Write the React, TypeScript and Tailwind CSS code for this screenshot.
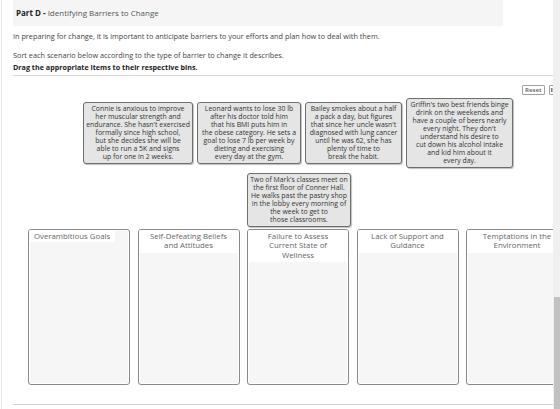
import React from "react";

const cards1: { w: string; lines: string[] }[] = [
  {
    w: "w-[110px]",
    lines: [
      "Connie is anxious to improve",
      "her muscular strength and",
      "endurance. She hasn't exercised",
      "formally since high school,",
      "but she decides she will be",
      "able to run a 5K and signs",
      "up for one in 2 weeks.",
    ],
  },
  {
    w: "w-[104px]",
    lines: [
      "Leonard wants to lose 30 lb",
      "after his doctor told him",
      "that his BMI puts him in",
      "the obese category. He sets a",
      "goal to lose 7 lb per week by",
      "dieting and exercising",
      "every day at the gym.",
    ],
  },
  {
    w: "w-[97px]",
    lines: [
      "Bailey smokes about a half",
      "a pack a day, but figures",
      "that since her uncle wasn't",
      "diagnosed with lung cancer",
      "until he was 62, she has",
      "plenty of time to",
      "break the habit.",
    ],
  },
  {
    w: "w-[107px]",
    lines: [
      "Griffin's two best friends binge",
      "drink on the weekends and",
      "have a couple of beers nearly",
      "every night. They don't",
      "understand his desire to",
      "cut down his alcohol intake",
      "and kid him about it",
      "every day.",
    ],
  },
];

const markLines = [
  "Two of Mark's classes meet on",
  "the first floor of Conner Hall.",
  "He walks past the pastry shop",
  "in the lobby every morning of",
  "the week to get to",
  "those classrooms.",
];

function Card({ w, lines }: { w: string; lines: string[] }) {
  return (
    <div
      className={`${w} shrink-0 bg-[#e5e5e5] border border-[#6e6e6e] rounded-[3px] shadow-[1px_1px_1px_rgba(0,0,0,0.25)] py-[2px] text-center text-[6.9px] leading-[8px] text-[#333]`}
    >
      {lines.map((l, i) => (
        <div key={i} className="whitespace-nowrap">
          {l}
        </div>
      ))}
    </div>
  );
}

const bins: string[][] = [
  ["Self-Defeating Beliefs", "and Attitudes"],
  ["Failure to Assess", "Current State of", "Wellness"],
  ["Lack of Support and", "Guidance"],
  ["Temptations in the", "Environment"],
];

function Bin({ children }: { children: React.ReactNode }) {
  return (
    <div className="w-[102px] h-[156px] shrink-0 border border-[#8a8a8e] rounded-[3px] bg-[#f6f6f7] shadow-[inset_0_0_0_1px_#ffffff] overflow-hidden">
      {children}
    </div>
  );
}

export default function App() {
  return (
    <div className="w-[560px] h-[409px] flex bg-white overflow-hidden font-['Open_Sans',sans-serif]">
      <div className="w-[553px] h-full overflow-hidden pl-[1px]">
        <div className="h-full border-l border-[#e4e4e4] pl-[11px]">
          <div className="h-[26px] w-[490px] bg-[#f5f5f5] flex items-center px-[3px] text-[8px] text-[#555]">
            <span className="font-bold text-[#222]">Part D -</span>
            <span className="ml-[2px]">Identifying Barriers to Change</span>
          </div>
          <p className="mt-[5px] text-[7.3px] leading-[10px] text-[#444] whitespace-nowrap">
            In preparing for change, it is important to anticipate barriers to your efforts and plan how to deal with them.
          </p>
          <p className="mt-[9px] text-[7.3px] leading-[10px] text-[#444] whitespace-nowrap">
            Sort each scenario below according to the type of barrier to change it describes.
          </p>
          <p className="mt-[2px] text-[7.2px] leading-[10px] font-bold text-[#222] whitespace-nowrap">
            Drag the appropriate items to their respective bins.
          </p>
          <div className="mt-[3px] border-t border-[#d8d8d8]" />
          <div className="mt-[9px] flex gap-[4px] pl-[509px] whitespace-nowrap">
            <div className="h-[10px] px-[2px] border border-[#a0a0a0] rounded-[1px] bg-white text-[6px] leading-[8px] font-bold text-[#777]">
              Reset
            </div>
            <div className="h-[10px] pl-[1px] border border-[#a0a0a0] rounded-[1px] bg-white text-[6px] leading-[8px] font-bold text-[#222]">
              I
            </div>
          </div>
          <div className="mt-[3px] flex items-center gap-[4px] pl-[70px]">
            {cards1.map((c, i) => (
              <Card key={i} w={c.w} lines={c.lines} />
            ))}
          </div>
          <div className="mt-[5px] pl-[234px] flex">
            <Card w="w-[104px]" lines={markLines} />
          </div>
          <div className="mt-[2px] pl-[15px] flex gap-[7.5px]">
            <Bin>
              <div className="w-fit bg-white pl-[5px] pr-[5px] pt-[2px] pb-[1px] text-[7.8px] leading-[9.3px] text-[#666] whitespace-nowrap">
                Overambitious Goals
              </div>
            </Bin>
            {bins.map((b, i) => (
              <Bin key={i}>
                <div className="bg-white pt-[2px] pb-[2px] text-center text-[7.8px] leading-[9.3px] text-[#666]">
                  {b.map((l, j) => (
                    <div key={j} className="whitespace-nowrap">
                      {l}
                    </div>
                  ))}
                </div>
              </Bin>
            ))}
          </div>
          <div className="mt-[19px] border-t border-[#d4d4d4]" />
        </div>
      </div>
      <div className="w-[7px] h-full bg-[#f0f0f0] flex flex-col justify-end">
        <div className="h-[112px] ml-[1px] bg-[#c1c1c1]" />
      </div>
    </div>
  );
}
